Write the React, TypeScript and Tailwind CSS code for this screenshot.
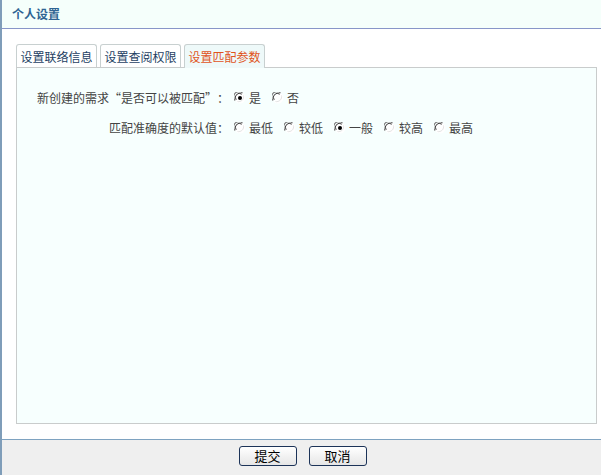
import { useState } from 'react';

const font = { fontFamily: '"Noto Sans CJK SC", "Liberation Sans", sans-serif' };

function Radio({ checked }: { checked: boolean }) {
  return (
    <svg width="12" height="12" viewBox="0 0 12 12" className="shrink-0">
      <circle cx="6" cy="6" r="5.5" fill="#ffffff" />
      <path d="M1.2 8.5 A5 5 0 0 1 8.5 1.2" fill="none" stroke="#7a7a7a" strokeWidth="1.1" />
      <path d="M2.2 7.8 A4 4 0 0 1 7.8 2.2" fill="none" stroke="#3a3a3a" strokeWidth="1" />
      <path d="M9.5 3.5 A5 5 0 0 1 3.5 9.5" fill="none" stroke="#e4e4e4" strokeWidth="1" />
      {checked && <circle cx="6" cy="6" r="2" fill="#000000" />}
    </svg>
  );
}

function RadioGroup({ options, value, onChange }: { options: string[]; value: string; onChange: (v: string) => void }) {
  return (
    <div className="flex items-center">
      {options.map((o) => (
        <label key={o} className="flex items-center gap-[3px] mr-[11px] cursor-pointer" onClick={() => onChange(o)}>
          <Radio checked={value === o} />
          <span>{o}</span>
        </label>
      ))}
    </div>
  );
}

export default function App() {
  const [tab, setTab] = useState(2);
  const [match, setMatch] = useState('是');
  const [level, setLevel] = useState('一般');
  const tabs = ['设置联络信息', '设置查阅权限', '设置匹配参数'];

  return (
    <div className="w-[601px] h-[475px] flex flex-col border-l-2 border-[#7f9db9] bg-white text-[12px] leading-[12px]" style={font}>
      <div className="h-[29px] shrink-0 bg-[#f5fffb] border-b border-[#8896c8] flex items-center pl-[10px]">
        <span className="font-bold text-[#2f6493] text-[12px]">个人设置</span>
      </div>

      <div className="flex-1 flex flex-col pt-[15px] pl-[14px] pr-[4px] pb-[15px]">
        <div className="flex gap-[3px] h-[23px] shrink-0">
          {tabs.map((t, i) => (
            <button
              key={t}
              onClick={() => setTab(i)}
              className={
                'w-[81px] h-[24px] rounded-t-[3px] border border-b-0 border-[#c8d0d0] flex items-center justify-center ' +
                (tab === i ? 'bg-[#eef9f9] text-[#e0541c] relative z-10' : 'bg-white text-[#1e3f63]')
              }
            >
              {t}
            </button>
          ))}
        </div>
        <div className="flex-1 border border-[#c9cccc] bg-[#f7fffe] text-[#444]">
          {tab === 2 && (
            <div className="grid grid-cols-[213px_1fr] gap-y-[18px] pt-[24px] items-center">
              <div className="text-right pr-[1px]">
                新创建的需求<span className="inline-block w-[12px] text-right">“</span>是否可以被匹配<span className="inline-block w-[12px] text-left">”</span>：
              </div>
              <div className="pl-[4px]">
                <RadioGroup options={['是', '否']} value={match} onChange={setMatch} />
              </div>
              <div className="text-right pr-[1px]">匹配准确度的默认值：</div>
              <div className="pl-[4px]">
                <RadioGroup options={['最低', '较低', '一般', '较高', '最高']} value={level} onChange={setLevel} />
              </div>
            </div>
          )}
        </div>
      </div>

      <div className="h-[36px] shrink-0 bg-[#efefef] border-t border-[#7ea2c0] flex justify-center items-start pt-[6px] gap-[12px] pl-[2px]">
        <button className="w-[58px] h-[20px] rounded-[3px] border border-[#1c3358] bg-gradient-to-b from-white to-[#e6e6e6] text-black text-[13px]">
          提交
        </button>
        <button className="w-[58px] h-[20px] rounded-[3px] border border-[#1c3358] bg-gradient-to-b from-white to-[#e6e6e6] text-black text-[13px]">
          取消
        </button>
      </div>
    </div>
  );
}
